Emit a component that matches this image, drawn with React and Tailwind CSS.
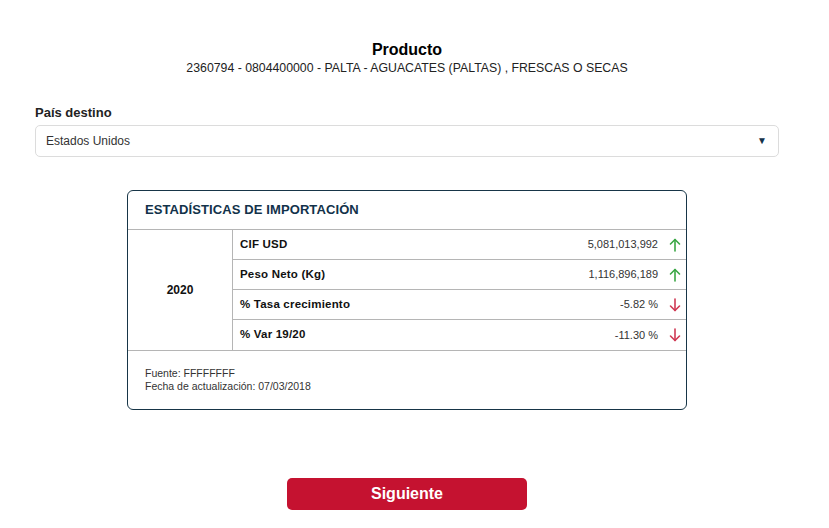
import React from "react";

const ArrowUp = () => (
  <svg width="12" height="14" viewBox="0 0 12 14" fill="none" stroke="#3aa745" strokeWidth="1.6" strokeLinecap="round" strokeLinejoin="round">
    <path d="M6 13V1.5" />
    <path d="M1.5 6L6 1.5L10.5 6" />
  </svg>
);

const ArrowDown = () => (
  <svg width="12" height="14" viewBox="0 0 12 14" fill="none" stroke="#d03a55" strokeWidth="1.6" strokeLinecap="round" strokeLinejoin="round">
    <path d="M6 1V12.5" />
    <path d="M1.5 8L6 12.5L10.5 8" />
  </svg>
);

const rows = [
  { label: "CIF USD", value: "5,081,013,992", up: true },
  { label: "Peso Neto (Kg)", value: "1,116,896,189", up: true },
  { label: "% Tasa crecimiento", value: "-5.82 %", up: false },
  { label: "% Var 19/20", value: "-11.30 %", up: false },
];

export default function App() {
  return (
    <div
      className="w-[829px] h-[528px] bg-white overflow-hidden"
      style={{ fontFamily: '"Liberation Sans", Arial, sans-serif' }}
    >
      <div className="ml-[35px] w-[744px] pt-[41px] flex flex-col">
        <div className="text-center text-[16px] leading-[18px] font-bold text-black">Producto</div>
        <div className="mt-[2px] text-center text-[12.3px] leading-[14px] text-[#222]">
          2360794 - 0804400000 - PALTA - AGUACATES (PALTAS) , FRESCAS O SECAS
        </div>

        <div className="mt-[30px] text-[13px] leading-[16px] font-bold text-[#222]">País destino</div>
        <div className="mt-[4px] h-[32px] border border-[#dcdcdc] rounded-[5px] flex items-center justify-between pl-[10px] pr-[11px]">
          <span className="text-[12px] text-[#333]">Estados Unidos</span>
          <span className="text-[10px] text-[#14324a] leading-none">▼</span>
        </div>

        <div className="mt-[33px] self-center w-[560px] border border-[#173547] rounded-[6px] overflow-hidden">
          <div className="h-[39px] flex items-center pl-[17px] text-[13px] tracking-[0.1px] font-bold text-[#12324a] border-b border-[#b5b5b5]">
            ESTADÍSTICAS DE IMPORTACIÓN
          </div>
          <div className="flex border-b border-[#b5b5b5]">
            <div className="w-[105px] border-r border-[#b5b5b5] flex items-center justify-center text-[12px] font-bold text-[#111]">
              2020
            </div>
            <div className="flex-1 flex flex-col">
              {rows.map((r, i) => (
                <div
                  key={r.label}
                  className={
                    "h-[30px] flex items-center pl-[7px] pr-[5px] " +
                    (i < rows.length - 1 ? "border-b border-[#b5b5b5]" : "")
                  }
                >
                  <span className="text-[11.5px] tracking-[0.2px] font-bold text-[#111] flex-1">{r.label}</span>
                  <span className="text-[11px] text-[#333]">{r.value}</span>
                  <span className="ml-[11px] flex items-center">{r.up ? <ArrowUp /> : <ArrowDown />}</span>
                </div>
              ))}
            </div>
          </div>
          <div className="pt-[16px] pb-[16px] pl-[17px] text-[10.5px] leading-[13px] text-[#333]">
            <div>Fuente: FFFFFFFF</div>
            <div>Fecha de actualización: 07/03/2018</div>
          </div>
        </div>

        <button className="mt-[68px] self-center w-[240px] h-[32px] rounded-[5px] bg-[#c51230] text-white text-[16px] font-bold">
          Siguiente
        </button>
      </div>
    </div>
  );
}
